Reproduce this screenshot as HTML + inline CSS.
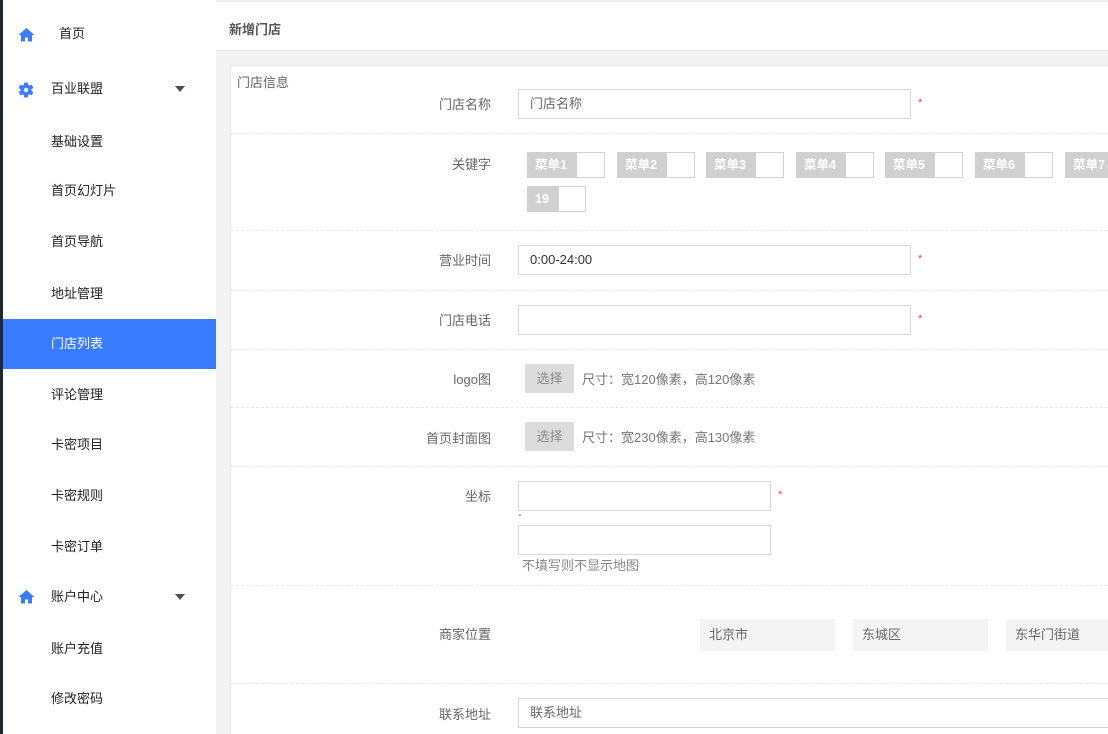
<!DOCTYPE html>
<html><head><meta charset="utf-8"><style>
*{margin:0;padding:0;box-sizing:border-box}
html,body{width:1108px;height:734px;overflow:hidden}
body{position:relative;background:#f3f3f3;font-family:"Liberation Sans","Noto Sans CJK SC",sans-serif;font-size:13px;color:#333}
.a{position:absolute}
#bar{left:0;top:0;width:3px;height:734px;background:#23282d}
#side{left:3px;top:0;width:213px;height:734px;background:#fff}
.mi{position:absolute;left:3px;width:213px;height:50px;line-height:50px;color:#222;font-size:13px}
.mi span{position:absolute;left:48px}
.act{background:#3a7cff;color:#fff}
.tri{position:absolute;left:172px;top:22px;width:0;height:0;border-left:5px solid transparent;border-right:5px solid transparent;border-top:6px solid #4a5060}
#head{left:216px;top:0;width:892px;height:51px;background:#fff;border-top:2px solid #eceef1;border-bottom:1px solid #e6e6e6}
#head b{position:absolute;left:13px;top:17px;font-size:13px;color:#555}
#panel{left:230px;top:65px;width:890px;height:680px;background:#fff;border:1px solid #e6e6e6}
.lab{position:absolute;right:617px;width:150px;text-align:right;color:#666}
.inp{position:absolute;background:#fff;border:1px solid #d6d6d6;height:30px;line-height:28px;padding-left:11px;color:#666}
.star{position:absolute;color:#e44;font-size:11px}
.hr{position:absolute;left:231px;width:877px;border-top:1px dashed #e8e8e8}
.tag{position:absolute;height:26px;width:78px;border:1px solid #d0d0d0;background:#fff}
.tag i{position:absolute;left:-1px;top:-1px;height:26px;width:50px;background:#d0d0d0;color:#fff;font-style:normal;font-weight:bold;line-height:26px;padding-left:8px;font-size:12.5px}
.btn{position:absolute;left:525px;width:49px;height:29px;background:#dcdcdc;color:#888;line-height:29px;text-align:center}
.tip{position:absolute;left:582px;color:#777}
.sel{position:absolute;top:619px;height:32px;width:135px;background:#f4f4f4;color:#666;line-height:32px;padding-left:9px}
</style></head><body>
<div class="a" id="bar"></div>
<div class="a" id="side"></div>
<svg class="a" style="left:18px;top:27px" width="17" height="15" viewBox="0 0 17 15"><path d="M8.5 1L0.5 8h2.5v6.5h4v-4h3v4h4V8h2.5z" fill="#3a7cff"/></svg>
<div class="mi" style="top:9px"><span style="left:56px">首页</span></div>
<svg class="a" style="left:18px;top:82px" width="16" height="16" viewBox="0 0 16 16"><g fill="#3a7cff"><rect x="6" y="0.5" width="4" height="15" rx="1"/><rect x="6" y="0.5" width="4" height="15" rx="1" transform="rotate(60 8 8)"/><rect x="6" y="0.5" width="4" height="15" rx="1" transform="rotate(120 8 8)"/><circle cx="8" cy="8" r="5.5"/></g><circle cx="8" cy="8" r="2.2" fill="#fff"/></svg>
<div class="mi" style="top:64px"><span>百业联盟</span><div class="tri"></div></div>
<div class="mi" style="top:117px"><span>基础设置</span></div>
<div class="mi" style="top:166px"><span>首页幻灯片</span></div>
<div class="mi" style="top:217px"><span>首页导航</span></div>
<div class="mi" style="top:269px"><span>地址管理</span></div>
<div class="mi act" style="top:319px"><span>门店列表</span></div>
<div class="mi" style="top:370px"><span>评论管理</span></div>
<div class="mi" style="top:420px"><span>卡密项目</span></div>
<div class="mi" style="top:471px"><span>卡密规则</span></div>
<div class="mi" style="top:522px"><span>卡密订单</span></div>
<svg class="a" style="left:18px;top:589px" width="17" height="15" viewBox="0 0 17 15"><path d="M8.5 1L0.5 8h2.5v6.5h4v-4h3v4h4V8h2.5z" fill="#3a7cff"/></svg>
<div class="mi" style="top:572px"><span>账户中心</span><div class="tri"></div></div>
<div class="mi" style="top:624px"><span>账户充值</span></div>
<div class="mi" style="top:674px"><span>修改密码</span></div>

<div class="a" id="head"><b>新增门店</b></div>
<div class="a" id="panel"></div>
<div class="a" style="left:237px;top:72px;color:#666">门店信息</div>

<div class="lab" style="top:94px">门店名称</div>
<div class="inp" style="left:518px;top:89px;width:393px">门店名称</div>
<div class="star" style="left:918px;top:97px">*</div>
<div class="hr" style="top:133px"></div>

<div class="lab" style="top:154px">关键字</div>
<div class="tag" style="left:527px;top:152px"><i>菜单1</i></div>
<div class="tag" style="left:617px;top:152px"><i>菜单2</i></div>
<div class="tag" style="left:706px;top:152px"><i>菜单3</i></div>
<div class="tag" style="left:796px;top:152px"><i>菜单4</i></div>
<div class="tag" style="left:885px;top:152px"><i>菜单5</i></div>
<div class="tag" style="left:975px;top:152px"><i>菜单6</i></div>
<div class="tag" style="left:1065px;top:152px"><i>菜单7</i></div>
<div class="tag" style="left:527px;top:186px;width:59px"><i style="width:32px">19</i></div>
<div class="hr" style="top:230px"></div>

<div class="lab" style="top:250px">营业时间</div>
<div class="inp" style="left:518px;top:245px;width:393px;color:#333">0:00-24:00</div>
<div class="star" style="left:918px;top:253px">*</div>
<div class="hr" style="top:290px"></div>

<div class="lab" style="top:310px">门店电话</div>
<div class="inp" style="left:518px;top:305px;width:393px"></div>
<div class="star" style="left:918px;top:313px">*</div>
<div class="hr" style="top:349px"></div>

<div class="lab" style="top:369px">logo图</div>
<div class="btn" style="top:364px">选择</div>
<div class="tip" style="top:369px">尺寸：宽120像素，高120像素</div>
<div class="hr" style="top:407px"></div>

<div class="lab" style="top:428px">首页封面图</div>
<div class="btn" style="top:422px">选择</div>
<div class="tip" style="top:427px">尺寸：宽230像素，高130像素</div>
<div class="hr" style="top:466px"></div>

<div class="lab" style="top:486px">坐标</div>
<div class="inp" style="left:518px;top:481px;width:253px"></div>
<div class="star" style="left:778px;top:489px">*</div>
<div class="a" style="left:518px;top:509px;color:#666;font-size:11px">-</div>
<div class="inp" style="left:518px;top:525px;width:253px"></div>
<div class="a" style="left:522px;top:555px;color:#888">不填写则不显示地图</div>
<div class="hr" style="top:585px"></div>

<div class="lab" style="top:624px">商家位置</div>
<div class="sel" style="left:700px">北京市</div>
<div class="sel" style="left:853px">东城区</div>
<div class="sel" style="left:1006px">东华门街道</div>
<div class="hr" style="top:683px"></div>

<div class="lab" style="top:704px">联系地址</div>
<div class="inp" style="left:518px;top:698px;width:600px">联系地址</div>
</body></html>
